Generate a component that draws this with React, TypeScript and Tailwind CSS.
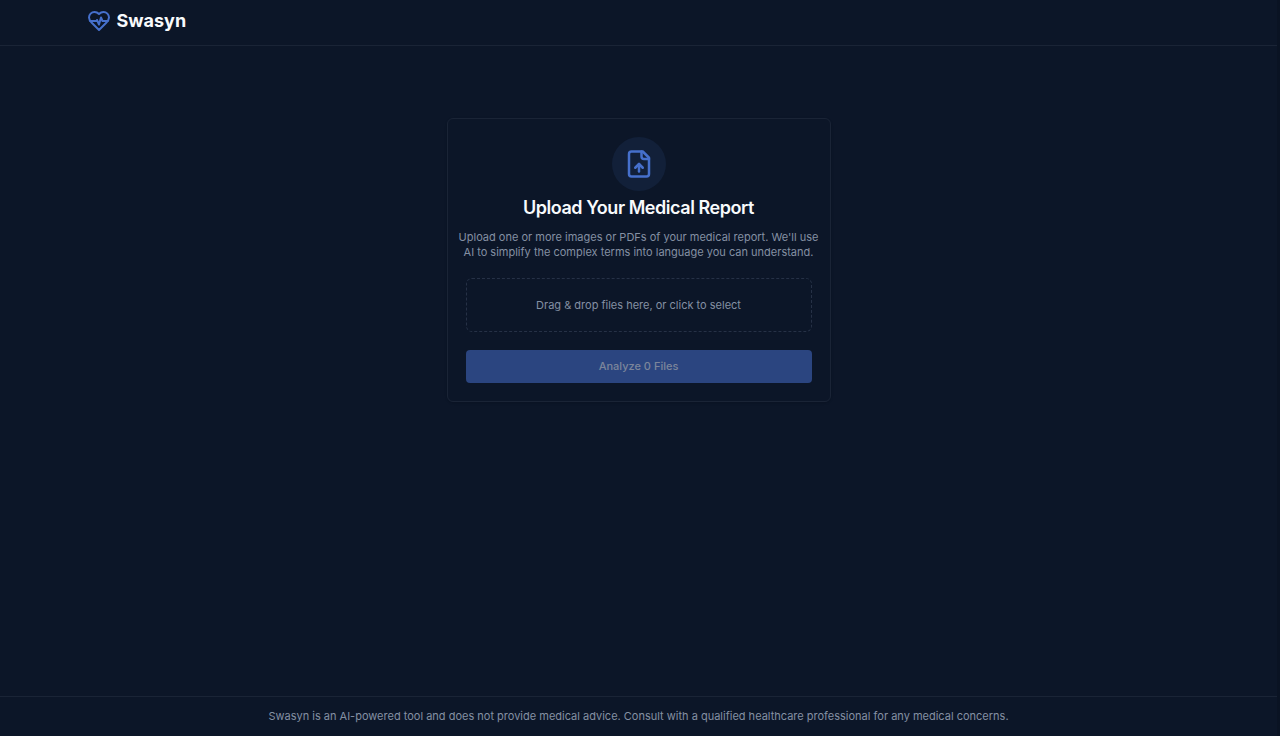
import type { ReactNode } from 'react'

function Icon({ className, children }: { className: string; children: ReactNode }) {
  return (
    <svg
      viewBox="0 0 24 24"
      fill="none"
      stroke="currentColor"
      strokeWidth="2"
      strokeLinecap="round"
      strokeLinejoin="round"
      aria-hidden="true"
      className={className}
    >
      {children}
    </svg>
  )
}

function HeartPulseIcon({ className }: { className: string }) {
  return (
    <Icon className={className}>
      <path d="M19 14c1.49-1.46 3-3.21 3-5.5A5.5 5.5 0 0 0 16.5 3c-1.76 0-3 .5-4.5 2-1.5-1.5-2.74-2-4.5-2A5.5 5.5 0 0 0 2 8.5c0 2.3 1.5 4.05 3 5.5l7 7Z" />
      <path d="M3.22 12H9.5l.5-1 2 4.5 2-7 1.5 3.5h5.27" />
    </Icon>
  )
}

function FileUpIcon({ className }: { className: string }) {
  return (
    <Icon className={className}>
      <path d="M15 2H6a2 2 0 0 0-2 2v16a2 2 0 0 0 2 2h12a2 2 0 0 0 2-2V7Z" />
      <path d="M14 2v4a2 2 0 0 0 2 2h4" />
      <path d="M12 12v6" />
      <path d="m15 15-3-3-3 3" />
    </Icon>
  )
}

function Header() {
  return (
    <header className="border-b border-[#1a2436]">
      <div className="mx-auto w-full max-w-[1104px] pt-[9px] pb-3">
        <a href="/" className="inline-flex items-center gap-1.5 align-top">
          <HeartPulseIcon className="h-6 w-6 text-[#4670cc]" />
          <span className="text-lg leading-6 font-bold text-[#f8fafc]">Swasyn</span>
        </a>
      </div>
    </header>
  )
}

function UploadCard() {
  return (
    <section className="w-full max-w-sm rounded-md border border-[#1a2436] p-[18px] text-center shadow-sm">
      {/* Card header */}
      <div className="mx-auto flex h-[54px] w-[54px] items-center justify-center rounded-full bg-[#122039]">
        <FileUpIcon className="h-[30px] w-[30px] text-[#4670cc]" />
      </div>
      <h1 className="mt-1 text-lg leading-[26px] font-semibold tracking-tight text-[#f8fafc]">
        Upload Your Medical Report
      </h1>
      <p className="-mx-2 mt-[9px] text-[11px] leading-[15px] text-[#8490a3]">
        Upload one or more images or PDFs of your medical report. We'll use
        <br />
        AI to simplify the complex terms into language you can understand.
      </p>

      {/* Dropzone */}
      <label className="relative mt-[18px] flex h-[54px] cursor-pointer items-center justify-center rounded-md border border-dashed border-[#263146] text-[11px] leading-[15px] text-[#8490a3]">
        Drag &amp; drop files here, or click to select
        <input type="file" multiple accept="image/*,application/pdf" className="sr-only" />
      </label>

      <button
        type="button"
        disabled
        className="mt-[18px] block h-[33px] w-full rounded bg-[#2b4580] text-[11px] font-medium text-[#7c859b]"
      >
        Analyze 0 Files
      </button>
    </section>
  )
}

export default function App() {
  return (
    <div className="flex min-h-screen flex-col border-r-3 border-[#0a1323] bg-[#0c1628] font-['Inter',sans-serif]">
      <Header />

      <main className="flex flex-1 flex-col items-center px-6 pt-[72px] pb-12">
        <UploadCard />
      </main>

      <footer className="border-t border-[#1a2436] px-6 py-3 text-center text-[11px] leading-[15px] text-[#8490a3]">
        <p>
          Swasyn is an AI-powered tool and does not provide medical advice. Consult with a qualified
          healthcare professional for any medical concerns.
        </p>
      </footer>
    </div>
  )
}
